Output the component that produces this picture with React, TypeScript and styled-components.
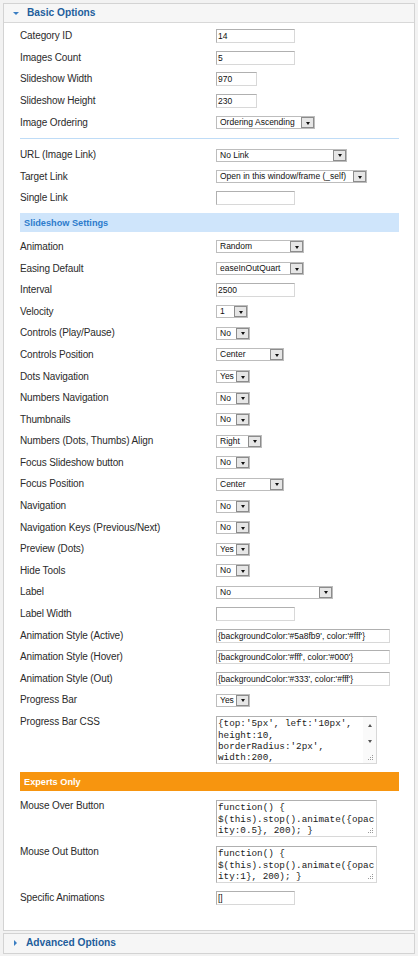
import React from 'react';
import styled, { createGlobalStyle } from 'styled-components';

const Global = createGlobalStyle`
  html, body { margin: 0; padding: 0; background: #f2f2f2; }
  body { font-family: "Liberation Sans", Arial, sans-serif; }
`;

const Page = styled.div`
  width: 418px;
  box-sizing: border-box;
  padding: 3px 3px 0 3px;
`;

const Panel = styled.section`
  border: 1px solid #d3d3d3;
  background: #fff;
  & + & { margin-top: 2px; }
`;

const PanelHead = styled.h3<{ $open?: boolean }>`
  margin: 0;
  height: 19px;
  box-sizing: border-box;
  display: flex;
  align-items: center;
  gap: 6px;
  padding-left: 9px;
  background: #f6f6f6;
  border-bottom: ${p => (p.$open ? '1px solid #d8d8d8' : 'none')};
  font-size: 10.2px;
  font-weight: bold;
  color: #1e5e9c;
  line-height: 12px;
`;

const TriDown = styled.span`
  width: 0; height: 0;
  border-left: 3px solid transparent;
  border-right: 3px solid transparent;
  border-top: 3px solid #3b7ec2;
  margin-right: 2px;
`;

const TriRight = styled.span`
  width: 0; height: 0;
  border-top: 3px solid transparent;
  border-bottom: 3px solid transparent;
  border-left: 3px solid #3b7ec2;
  margin-left: 1px;
  margin-right: 3px;
`;

const Body = styled.div`
  padding: 2.4px 15px 21px 16px;
`;

const Row = styled.div`
  display: grid;
  grid-template-columns: 196px 1fr;
  align-items: center;
  height: 21.6px;
`;

const AreaRow = styled.div`
  display: grid;
  grid-template-columns: 196px 1fr;
  align-items: start;
  padding: 5px 0 4px 0;
`;

const Label = styled.div`
  font-size: 10px;
  line-height: 12px;
  letter-spacing: -0.12px;
  color: #2b2b2b;
  white-space: nowrap;
`;

const Separator = styled.div`
  height: 1px;
  background: #bfdcf7;
  margin: 5px 0;
`;

const Bar = styled.div<{ $tone: 'blue' | 'orange' }>`
  height: 19px;
  margin: 4px 0;
  display: flex;
  align-items: center;
  padding-left: 4px;
  font-size: 9.2px;
  font-weight: bold;
  background: ${p => (p.$tone === 'blue' ? '#cfe5fb' : '#f7950f')};
  color: ${p => (p.$tone === 'blue' ? '#2d7ccc' : '#ffffff')};
`;

const Input = styled.div<{ $w: number }>`
  width: ${p => p.$w}px;
  height: 14px;
  box-sizing: border-box;
  border: 1px solid;
  border-color: #b0b0b0 #d8d8d8 #d8d8d8 #b0b0b0;
  background: #fff;
  padding-left: 1px;
  font-size: 8.5px;
  line-height: 12px;
  color: #111;
  white-space: nowrap;
  overflow: hidden;
`;

const SelectBox = styled.div<{ $w: number }>`
  width: ${p => p.$w}px;
  height: 13px;
  box-sizing: border-box;
  border: 1px solid #bdbdbd;
  background: #fff;
  display: flex;
  align-items: stretch;
`;

const SelectText = styled.span`
  flex: 1;
  padding-left: 3px;
  font-size: 8.5px;
  line-height: 11px;
  color: #111;
  white-space: nowrap;
  overflow: hidden;
`;

const SelectBtn = styled.span`
  width: 13px;
  box-sizing: border-box;
  border: 1px solid #8c8c8c;
  background: #e6e6e6;
  display: flex;
  align-items: center;
  justify-content: center;
  padding-top: 1px;
`;

const ArrowDown = styled.span`
  width: 0; height: 0;
  border-left: 2.5px solid transparent;
  border-right: 2.5px solid transparent;
  border-top: 3px solid #111;
`;

const Area = styled.div<{ $w: number; $h: number }>`
  position: relative;
  width: ${p => p.$w}px;
  height: ${p => p.$h}px;
  box-sizing: border-box;
  border: 1px solid;
  border-color: #b0b0b0 #d8d8d8 #d8d8d8 #b0b0b0;
  background: #fff;
  display: flex;
`;

const AreaText = styled.div`
  flex: 1;
  padding: 1px 1px 0 1px;
  font-family: "Liberation Mono", "Courier New", monospace;
  font-size: 9.3px;
  line-height: 11.3px;
  color: #1a1a1a;
  white-space: pre;
  overflow: hidden;
`;

const Scroll = styled.div`
  width: 13px;
  display: flex;
  flex-direction: column;
  background: #fafafa;
`;

const ScrollBtn = styled.div<{ $h: number }>`
  height: ${p => p.$h}px;
  display: flex;
  align-items: center;
  justify-content: center;
`;

const SmallUp = styled.span`
  width: 0; height: 0;
  border-left: 2.5px solid transparent;
  border-right: 2.5px solid transparent;
  border-bottom: 3px solid #555;
`;

const SmallDown = styled.span`
  width: 0; height: 0;
  border-left: 2.5px solid transparent;
  border-right: 2.5px solid transparent;
  border-top: 3px solid #555;
`;

const Grip = styled.svg`
  position: absolute;
  right: 2px;
  bottom: 2px;
`;

const GripIcon = () => (
  <Grip width="6" height="6" viewBox="0 0 6 6">
    <rect x="4" y="0" width="1" height="1" fill="#999" />
    <rect x="2" y="2" width="1" height="1" fill="#999" />
    <rect x="4" y="2" width="1" height="1" fill="#999" />
    <rect x="0" y="4" width="1" height="1" fill="#999" />
    <rect x="2" y="4" width="1" height="1" fill="#999" />
    <rect x="4" y="4" width="1" height="1" fill="#999" />
  </Grip>
);

type Item =
  | { k: 'input'; label: string; w: number; v: string }
  | { k: 'select'; label: string; w: number; v: string }
  | { k: 'area'; label: string; h: number; lines: string[]; scroll?: boolean }
  | { k: 'sep' }
  | { k: 'bar'; tone: 'blue' | 'orange'; text: string };

const items: Item[] = [
  { k: 'input', label: 'Category ID', w: 79, v: '14' },
  { k: 'input', label: 'Images Count', w: 79, v: '5' },
  { k: 'input', label: 'Slideshow Width', w: 41, v: '970' },
  { k: 'input', label: 'Slideshow Height', w: 41, v: '230' },
  { k: 'select', label: 'Image Ordering', w: 99, v: 'Ordering Ascending' },
  { k: 'sep' },
  { k: 'select', label: 'URL (Image Link)', w: 131, v: 'No Link' },
  { k: 'select', label: 'Target Link', w: 151, v: 'Open in this window/frame (_self)' },
  { k: 'input', label: 'Single Link', w: 79, v: '' },
  { k: 'bar', tone: 'blue', text: 'Slideshow Settings' },
  { k: 'select', label: 'Animation', w: 88, v: 'Random' },
  { k: 'select', label: 'Easing Default', w: 88, v: 'easeInOutQuart' },
  { k: 'input', label: 'Interval', w: 79, v: '2500' },
  { k: 'select', label: 'Velocity', w: 32, v: '1' },
  { k: 'select', label: 'Controls (Play/Pause)', w: 34, v: 'No' },
  { k: 'select', label: 'Controls Position', w: 68, v: 'Center' },
  { k: 'select', label: 'Dots Navigation', w: 34, v: 'Yes' },
  { k: 'select', label: 'Numbers Navigation', w: 34, v: 'No' },
  { k: 'select', label: 'Thumbnails', w: 34, v: 'No' },
  { k: 'select', label: 'Numbers (Dots, Thumbs) Align', w: 46, v: 'Right' },
  { k: 'select', label: 'Focus Slideshow button', w: 34, v: 'No' },
  { k: 'select', label: 'Focus Position', w: 68, v: 'Center' },
  { k: 'select', label: 'Navigation', w: 34, v: 'No' },
  { k: 'select', label: 'Navigation Keys (Previous/Next)', w: 34, v: 'No' },
  { k: 'select', label: 'Preview (Dots)', w: 34, v: 'Yes' },
  { k: 'select', label: 'Hide Tools', w: 34, v: 'No' },
  { k: 'select', label: 'Label', w: 117, v: 'No' },
  { k: 'input', label: 'Label Width', w: 79, v: '' },
  { k: 'input', label: 'Animation Style (Active)', w: 174, v: "{backgroundColor:'#5a8fb9', color:'#fff'}" },
  { k: 'input', label: 'Animation Style (Hover)', w: 174, v: "{backgroundColor:'#fff', color:'#000'}" },
  { k: 'input', label: 'Animation Style (Out)', w: 174, v: "{backgroundColor:'#333', color:'#fff'}" },
  { k: 'select', label: 'Progress Bar', w: 34, v: 'Yes' },
  {
    k: 'area',
    label: 'Progress Bar CSS',
    h: 48,
    scroll: true,
    lines: ["{top:'5px', left:'10px',", 'height:10,', "borderRadius:'2px',", 'width:200,'],
  },
  { k: 'bar', tone: 'orange', text: 'Experts Only' },
  {
    k: 'area',
    label: 'Mouse Over Button',
    h: 37,
    lines: ['function() {', '$(this).stop().animate({opac', 'ity:0.5}, 200); }'],
  },
  {
    k: 'area',
    label: 'Mouse Out Button',
    h: 37,
    lines: ['function() {', '$(this).stop().animate({opac', 'ity:1}, 200); }'],
  },
  { k: 'input', label: 'Specific Animations', w: 79, v: '[]' },
];

const Select = ({ w, v }: { w: number; v: string }) => (
  <SelectBox $w={w}>
    <SelectText>{v}</SelectText>
    <SelectBtn>
      <ArrowDown />
    </SelectBtn>
  </SelectBox>
);

const renderItem = (it: Item, i: number) => {
  switch (it.k) {
    case 'sep':
      return <Separator key={i} />;
    case 'bar':
      return (
        <Bar key={i} $tone={it.tone}>
          {it.text}
        </Bar>
      );
    case 'input':
      return (
        <Row key={i}>
          <Label>{it.label}</Label>
          <Input $w={it.w}>{it.v}</Input>
        </Row>
      );
    case 'select':
      return (
        <Row key={i}>
          <Label>{it.label}</Label>
          <Select w={it.w} v={it.v} />
        </Row>
      );
    case 'area':
      return (
        <AreaRow key={i}>
          <Label>{it.label}</Label>
          <Area $w={161} $h={it.h}>
            <AreaText>{it.lines.join('\n')}</AreaText>
            {it.scroll && (
              <Scroll>
                <ScrollBtn $h={16}>
                  <SmallUp />
                </ScrollBtn>
                <ScrollBtn $h={17}>
                  <SmallDown />
                </ScrollBtn>
              </Scroll>
            )}
            <GripIcon />
          </Area>
        </AreaRow>
      );
  }
};

export default function App() {
  return (
    <>
      <Global />
      <Page>
        <Panel>
          <PanelHead $open>
            <TriDown />
            Basic Options
          </PanelHead>
          <Body>{items.map(renderItem)}</Body>
        </Panel>
        <Panel>
          <PanelHead>
            <TriRight />
            Advanced Options
          </PanelHead>
        </Panel>
      </Page>
    </>
  );
}
